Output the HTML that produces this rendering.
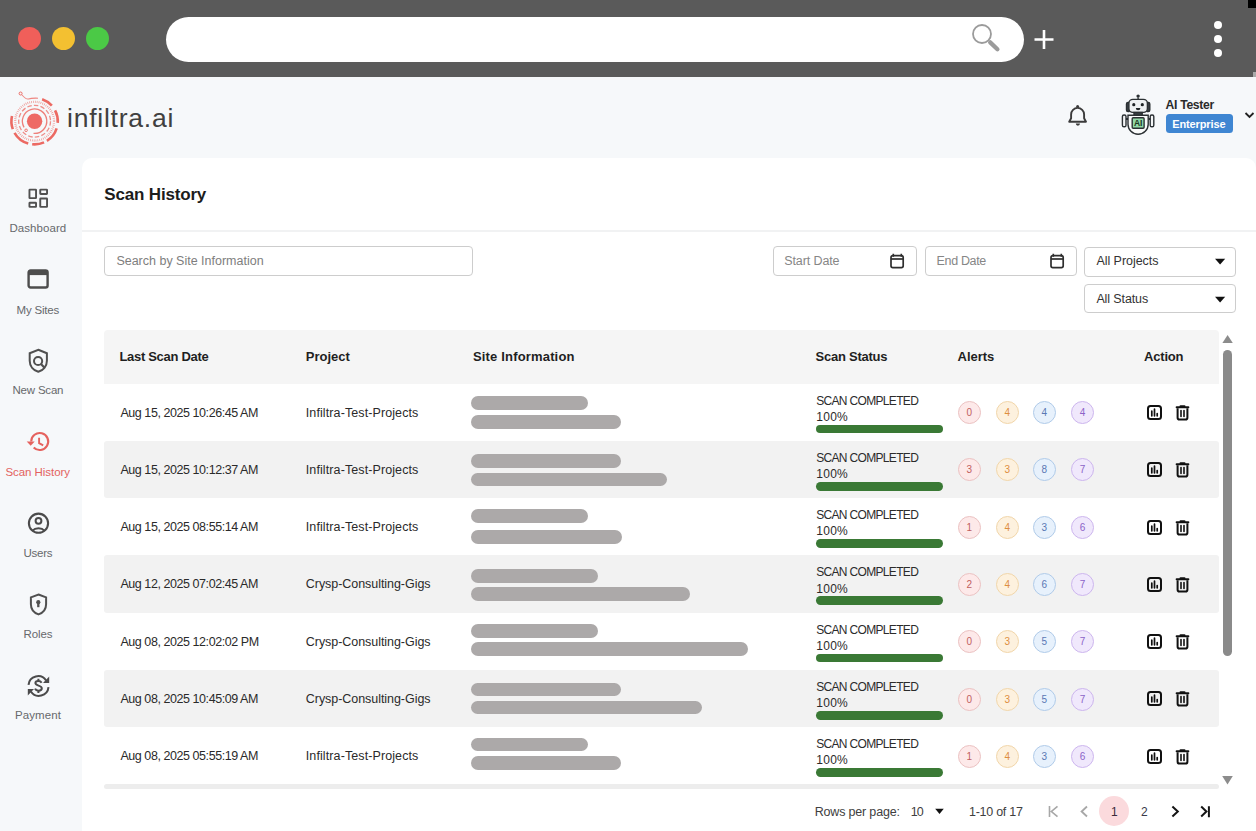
<!DOCTYPE html>
<html><head><meta charset="utf-8">
<style>
*{margin:0;padding:0;box-sizing:border-box}
html,body{width:1256px;height:831px;overflow:hidden;background:#f6f8fa;font-family:"Liberation Sans",sans-serif;color:#222;position:relative}
.a{position:absolute}
.t{position:absolute;white-space:nowrap;line-height:1}
.dot{position:absolute;width:23px;height:23px;border-radius:50%;top:27.2px}
.inp{position:absolute;border:1px solid #cdcdcd;border-radius:4px;background:#fff}
.bar{position:absolute;left:470.7px;height:13.8px;border-radius:7px;background:#aca9a9}
.pgb{position:absolute;left:816px;width:127px;height:8.8px;border-radius:4.5px;background:#3a7935}
.al{position:absolute;width:23px;height:23px;border-radius:50%;font-size:10px;line-height:21px;text-align:center;border:1px solid;font-family:"Liberation Sans",sans-serif}
.a0{background:#fde9e9;border-color:#ebc2c2;color:#c15f5f}
.a1{background:#fdf1de;border-color:#f1d6aa;color:#dd8e3f}
.a2{background:#e7f1fc;border-color:#b0cbe9;color:#5a78b4}
.a3{background:#f0e8fc;border-color:#cdb6ee;color:#8b63c8}
.g{border-radius:3px;background:#f2f2f2}
</style></head><body>
<!-- browser chrome -->
<div class="a" style="left:0;top:0;width:1256px;height:77px;background:#5a5a5a"></div>
<div class="a" style="left:1248px;top:0;width:8px;height:8px;background:#000"></div>
<div class="a" style="left:1253px;top:72px;width:3px;height:5px;background:#aaa"></div>
<div class="dot" style="left:18px;background:#f05f5a"></div>
<div class="dot" style="left:52px;background:#f3c031"></div>
<div class="dot" style="left:86px;background:#4bc946"></div>
<div class="a" style="left:166px;top:17px;width:858px;height:45px;background:#fff;border-radius:22.5px"></div>
<svg class="a" style="left:970px;top:22px" width="32" height="32" viewBox="0 0 32 32"><circle cx="12" cy="12" r="9" fill="none" stroke="#9b9b9b" stroke-width="1.8"/><path d="M20.2 20.4L27.4 27.2" stroke="#9b9b9b" stroke-width="4.3" stroke-linecap="round"/></svg>
<svg class="a" style="left:1033px;top:29px" width="22" height="22" viewBox="0 0 22 22"><path d="M11 1v19M1.5 10.5h19" stroke="#fff" stroke-width="2.6"/></svg>
<div class="a" style="left:1213.9px;top:21px;width:8px;height:8px;border-radius:50%;background:#fff"></div>
<div class="a" style="left:1213.9px;top:35px;width:8px;height:8px;border-radius:50%;background:#fff"></div>
<div class="a" style="left:1213.9px;top:48.7px;width:8px;height:8px;border-radius:50%;background:#fff"></div>

<!-- logo -->
<svg class="a" style="left:4px;top:88px" width="62" height="62" viewBox="0 0 62 62">
 <g fill="none" stroke="#ec6a63">
  <circle cx="30.6" cy="33.2" r="7.7" fill="#ee6a65" stroke="none"/>
  <path d="M20.03 39.30A12.2 12.2 0 1 1 29.54 45.35" stroke-width="1.3" stroke-opacity="0.85"/>
  <circle cx="22.1" cy="42.3" r="1.3" stroke-width="0.9"/>
  <circle cx="30.6" cy="33.2" r="15.9" stroke-width="1.3" stroke-dasharray="4.5 2.2" stroke-opacity="0.75"/>
  <circle cx="30.6" cy="33.2" r="19.4" stroke-width="2.2" stroke-dasharray="0.7 1.2" stroke-opacity="0.7"/>
  <path d="M38.15 11.26A23.2 23.2 0 0 1 47.84 17.68M51.08 22.31A23.2 23.2 0 0 1 53.74 34.82M52.66 40.37A23.2 23.2 0 0 1 42.89 52.87M40.04 54.39A23.2 23.2 0 0 1 28.17 56.27M24.21 55.50A23.2 23.2 0 0 1 10.51 44.80M8.80 41.13A23.2 23.2 0 0 1 7.99 27.98" stroke-width="2.6"/>
  <path d="M34 10.2 Q27 10 24.5 11 Q22 11.5 18 7" stroke-width="1.1" stroke-opacity="0.8"/>
  <circle cx="16.6" cy="5.5" r="1.5" stroke-width="1"/>
 </g>
</svg>

<!-- header right -->
<svg class="a" style="left:1060px;top:98px" width="36" height="34" viewBox="0 0 36 34"><path d="M11.1 20.2V16.4a6.5 6.5 0 0 1 13 0V20.2l1.9 3.5H9.2z" fill="none" stroke="#3b3b3b" stroke-width="1.9" stroke-linejoin="round"/><path d="M15.8 25.6h4.2a2.1 2.1 0 0 1-4.2 0z" fill="#3b3b3b"/><circle cx="17.6" cy="8.4" r="1.5" fill="#3b3b3b"/></svg>

<svg class="a" style="left:1120px;top:93px" width="36" height="44" viewBox="0 0 36 44">
 <g stroke="#2b3033" stroke-width="1.4">
  <circle cx="18.1" cy="3.1" r="1.7" fill="#2b3033" stroke="none"/>
  <path d="M18.1 4.5v2.5"/>
  <rect x="6.5" y="9.5" width="4" height="9" rx="1.5" fill="#3a4045"/>
  <rect x="25.8" y="9.5" width="4" height="9" rx="1.5" fill="#3a4045"/>
  <rect x="8.9" y="6.4" width="18.5" height="13" rx="4" fill="#eef1f3"/>
  <rect x="14" y="19.5" width="8.2" height="3" fill="#3a4045"/>
  <rect x="2.4" y="22" width="3.6" height="11.8" rx="1.6" fill="#f4f6f7"/>
  <rect x="30.2" y="22" width="3.6" height="11.8" rx="1.6" fill="#f4f6f7"/>
  <path d="M6 26h2M28.4 26h2" stroke-width="2"/>
  <path d="M8 22.2h20.2v9a10.1 10.1 0 0 1-20.2 0z" fill="#fafbfb"/>
  <rect x="12.2" y="24.8" width="11.9" height="10.5" rx="1" fill="#90d9a6"/>
 </g>
 <circle cx="13.8" cy="11.7" r="1.6" fill="#1e2326"/>
 <circle cx="22.3" cy="11.7" r="1.6" fill="#1e2326"/>
 <path d="M15.8 15h4.6a2.3 2.3 0 0 1-4.6 0z" fill="#1e2326"/>
 <text x="18.2" y="33.2" font-family="Liberation Sans" font-weight="bold" font-size="8.5" text-anchor="middle" fill="#1c3524">AI</text>
</svg>
<div class="a" style="left:1165.6px;top:114px;width:67.2px;height:19.4px;background:#3f86d2;border-radius:3.5px"></div>
<svg class="a" style="left:1243px;top:110px" width="13" height="10" viewBox="0 0 13 10"><path d="M2.5 3l4 4 4-4" fill="none" stroke="#222" stroke-width="1.8"/></svg>

<!-- sidebar icons -->
<svg class="a" style="left:22px;top:182px" width="32" height="32" viewBox="0 0 32 32"><g fill="none" stroke="#505050" stroke-width="1.9"><rect x="7.45" y="7.65" width="6.6" height="8.5" rx="0.4"/><rect x="7.45" y="20.75" width="6.6" height="4.1" rx="0.4"/><rect x="18.25" y="7.65" width="6.8" height="4.3" rx="0.4"/><rect x="18.25" y="16.55" width="6.8" height="8.3" rx="0.4"/></g></svg>
<svg class="a" style="left:26px;top:267px" width="24" height="24" viewBox="0 0 24 24"><rect x="2.6" y="3.5" width="19" height="17" rx="2" fill="none" stroke="#4d4d4d" stroke-width="2.4"/><rect x="2.6" y="3.5" width="19" height="4.6" fill="#4d4d4d"/></svg>
<svg class="a" style="left:26px;top:348px" width="24" height="26" viewBox="0 0 24 26"><path d="M12.3 1.8l8.6 3.4v7.5c0 5.5-3.7 9.6-8.6 11.1-4.9-1.5-8.6-5.6-8.6-11.1V5.2z" fill="none" stroke="#505050" stroke-width="2"/><circle cx="12.1" cy="13" r="4.1" fill="none" stroke="#505050" stroke-width="2"/><path d="M15 16l3.3 3.5" stroke="#505050" stroke-width="2.2"/></svg>
<svg class="a" style="left:25px;top:430px" width="27" height="25" viewBox="0 0 27 25"><path d="M6.2 11.5a8.5 8.5 0 1 1 2.49 6.01" fill="none" stroke="#e5625e" stroke-width="2.1"/><path d="M1.7 11.4h8l-4 4.3z" fill="#e5625e"/><path d="M14.1 7.8v5.3l4.1 2.2" fill="none" stroke="#e5625e" stroke-width="1.9"/></svg>
<svg class="a" style="left:26px;top:511px" width="25" height="25" viewBox="0 0 25 25"><circle cx="12.5" cy="12.2" r="9.6" fill="none" stroke="#4b4b4b" stroke-width="2.1"/><circle cx="12.5" cy="9.8" r="2.9" fill="none" stroke="#4b4b4b" stroke-width="2"/><path d="M6.2 19.9c1.8-1.9 3.8-2.7 6.3-2.7s4.5.8 6.3 2.7" fill="none" stroke="#4b4b4b" stroke-width="2.1"/></svg>
<svg class="a" style="left:27px;top:591.5px" width="23" height="25" viewBox="0 0 23 25"><path d="M11.5 2.5l7.6 2.9v6.8c0 4.9-3.2 8.6-7.6 10.2-4.4-1.6-7.6-5.3-7.6-10.2V5.4z" fill="none" stroke="#505050" stroke-width="2"/><circle cx="11.3" cy="10.2" r="2.1" fill="#505050"/><path d="M11.3 10.8v4.4" stroke="#505050" stroke-width="2.3"/></svg>
<svg class="a" style="left:25px;top:673px" width="27" height="26" viewBox="0 0 27 26"><g fill="none" stroke="#4b4b4b" stroke-width="2"><path d="M3.5 11.8a9.6 9.6 0 0 1 17.6-4.3"/><path d="M23.5 14.2a9.6 9.6 0 0 1-17.6 4.3"/><path d="M16.6 9.7c-.6-1.2-1.8-1.8-3.3-1.8-1.7 0-2.9.9-2.9 2.2 0 3.1 6.4 1.9 6.4 5.2 0 1.4-1.3 2.4-3.2 2.4-1.6 0-3-.7-3.6-2"/><path d="M13.4 5.8v2.2M13.4 17.8v2.2"/></g><path d="M24.2 3.6v6.4h-6.2z" fill="#4b4b4b"/><path d="M2.8 22.4v-6.4h6.2z" fill="#4b4b4b"/></svg>

<!-- main panel -->
<div class="a" style="left:82px;top:158px;width:1174px;height:673px;background:#fff;border-radius:10px 10px 0 0"></div>
<div class="a" style="left:82px;top:229.5px;width:1174px;height:2px;background:#f1f2f3"></div>

<!-- filters -->
<div class="inp" style="left:104.4px;top:246.4px;width:369px;height:30px"></div>
<div class="inp" style="left:773px;top:246.3px;width:144px;height:30.2px"></div>
<div class="inp" style="left:925px;top:246.3px;width:151.5px;height:30.2px"></div>
<div class="inp" style="left:1084.2px;top:246.5px;width:151.6px;height:30.2px"></div>
<div class="inp" style="left:1084.2px;top:284.4px;width:151.6px;height:29px"></div>
<svg class="a" style="left:888px;top:252px" width="18" height="18" viewBox="0 0 18 18"><rect x="3" y="3.6" width="12.2" height="12" rx="1.8" fill="none" stroke="#2e2e2e" stroke-width="1.7"/><path d="M3 7h12.2" stroke="#2e2e2e" stroke-width="1.7"/><path d="M5.3 1.8v3M13.3 1.8v3" stroke="#2e2e2e" stroke-width="1.6"/></svg>
<svg class="a" style="left:1048px;top:252px" width="18" height="18" viewBox="0 0 18 18"><rect x="3" y="3.6" width="12.2" height="12" rx="1.8" fill="none" stroke="#2e2e2e" stroke-width="1.7"/><path d="M3 7h12.2" stroke="#2e2e2e" stroke-width="1.7"/><path d="M5.3 1.8v3M13.3 1.8v3" stroke="#2e2e2e" stroke-width="1.6"/></svg>
<svg class="a" style="left:1214px;top:258px" width="12" height="8" viewBox="0 0 12 8"><path d="M1 0.8h10.2L6.1 6.5z" fill="#111"/></svg>
<svg class="a" style="left:1214px;top:296px" width="12" height="8" viewBox="0 0 12 8"><path d="M1 0.8h10.2L6.1 6.5z" fill="#111"/></svg>

<!-- table -->
<div class="a" style="left:104px;top:330.2px;width:1114.5px;height:53.5px;background:#f5f5f5;border-radius:4px 4px 0 0"></div>
<div class="a" style="left:104px;top:784px;width:1115px;height:5px;background:#ededed;border-radius:2.5px"></div>
<div class="a g" style="left:104px;top:440.75px;width:1115px;height:57.25px"></div>
<div class="a g" style="left:104px;top:555.25px;width:1115px;height:57.25px"></div>
<div class="a g" style="left:104px;top:669.75px;width:1115px;height:57.25px"></div>
<div class="bar" style="top:396.2px;width:117.1px"></div>
<div class="bar" style="top:414.9px;width:150.0px"></div>
<div class="pgb" style="top:424.5px"></div>
<div class="al a0" style="left:957.7px;top:401.2px">0</div>
<div class="al a1" style="left:995.9px;top:401.2px">4</div>
<div class="al a2" style="left:1032.9px;top:401.2px">4</div>
<div class="al a3" style="left:1071.1px;top:401.2px">4</div>
<svg class="a" style="left:1146px;top:404.0px" width="17" height="17" viewBox="0 0 17 17"><rect x="2" y="2" width="13" height="13" rx="2.5" fill="none" stroke="#111" stroke-width="2"/><path d="M5.8 7.2v4.6M8.5 5.2v6.6M11.2 9.5v2.3" stroke="#111" stroke-width="1.7" stroke-linecap="round"/></svg>
<svg class="a" style="left:1175px;top:404.0px" width="15" height="17" viewBox="0 0 15 17"><path d="M1.6 3.2h11.8" stroke="#111" stroke-width="1.9" stroke-linecap="round"/><path d="M5.5 2.2h4" stroke="#111" stroke-width="2" stroke-linecap="round"/><path d="M2.6 4.2v9.6a1.8 1.8 0 0 0 1.8 1.8h6.2a1.8 1.8 0 0 0 1.8-1.8V4.2" fill="none" stroke="#111" stroke-width="2"/><path d="M6 6.5v6M9 6.5v6" stroke="#111" stroke-width="1.6" stroke-linecap="round"/></svg>
<div class="bar" style="top:454.3px;width:150.0px"></div>
<div class="bar" style="top:472.6px;width:195.9px"></div>
<div class="pgb" style="top:481.8px"></div>
<div class="al a0" style="left:957.7px;top:458.4px">3</div>
<div class="al a1" style="left:995.9px;top:458.4px">3</div>
<div class="al a2" style="left:1032.9px;top:458.4px">8</div>
<div class="al a3" style="left:1071.1px;top:458.4px">7</div>
<svg class="a" style="left:1146px;top:461.2px" width="17" height="17" viewBox="0 0 17 17"><rect x="2" y="2" width="13" height="13" rx="2.5" fill="none" stroke="#111" stroke-width="2"/><path d="M5.8 7.2v4.6M8.5 5.2v6.6M11.2 9.5v2.3" stroke="#111" stroke-width="1.7" stroke-linecap="round"/></svg>
<svg class="a" style="left:1175px;top:461.2px" width="15" height="17" viewBox="0 0 15 17"><path d="M1.6 3.2h11.8" stroke="#111" stroke-width="1.9" stroke-linecap="round"/><path d="M5.5 2.2h4" stroke="#111" stroke-width="2" stroke-linecap="round"/><path d="M2.6 4.2v9.6a1.8 1.8 0 0 0 1.8 1.8h6.2a1.8 1.8 0 0 0 1.8-1.8V4.2" fill="none" stroke="#111" stroke-width="2"/><path d="M6 6.5v6M9 6.5v6" stroke="#111" stroke-width="1.6" stroke-linecap="round"/></svg>
<div class="bar" style="top:509.0px;width:117.1px"></div>
<div class="bar" style="top:529.9px;width:151.3px"></div>
<div class="pgb" style="top:539.0px"></div>
<div class="al a0" style="left:957.7px;top:515.7px">1</div>
<div class="al a1" style="left:995.9px;top:515.7px">4</div>
<div class="al a2" style="left:1032.9px;top:515.7px">3</div>
<div class="al a3" style="left:1071.1px;top:515.7px">6</div>
<svg class="a" style="left:1146px;top:518.5px" width="17" height="17" viewBox="0 0 17 17"><rect x="2" y="2" width="13" height="13" rx="2.5" fill="none" stroke="#111" stroke-width="2"/><path d="M5.8 7.2v4.6M8.5 5.2v6.6M11.2 9.5v2.3" stroke="#111" stroke-width="1.7" stroke-linecap="round"/></svg>
<svg class="a" style="left:1175px;top:518.5px" width="15" height="17" viewBox="0 0 15 17"><path d="M1.6 3.2h11.8" stroke="#111" stroke-width="1.9" stroke-linecap="round"/><path d="M5.5 2.2h4" stroke="#111" stroke-width="2" stroke-linecap="round"/><path d="M2.6 4.2v9.6a1.8 1.8 0 0 0 1.8 1.8h6.2a1.8 1.8 0 0 0 1.8-1.8V4.2" fill="none" stroke="#111" stroke-width="2"/><path d="M6 6.5v6M9 6.5v6" stroke="#111" stroke-width="1.6" stroke-linecap="round"/></svg>
<div class="bar" style="top:568.8px;width:127.3px"></div>
<div class="bar" style="top:587.2px;width:219.8px"></div>
<div class="pgb" style="top:596.2px"></div>
<div class="al a0" style="left:957.7px;top:573.0px">2</div>
<div class="al a1" style="left:995.9px;top:573.0px">4</div>
<div class="al a2" style="left:1032.9px;top:573.0px">6</div>
<div class="al a3" style="left:1071.1px;top:573.0px">7</div>
<svg class="a" style="left:1146px;top:575.8px" width="17" height="17" viewBox="0 0 17 17"><rect x="2" y="2" width="13" height="13" rx="2.5" fill="none" stroke="#111" stroke-width="2"/><path d="M5.8 7.2v4.6M8.5 5.2v6.6M11.2 9.5v2.3" stroke="#111" stroke-width="1.7" stroke-linecap="round"/></svg>
<svg class="a" style="left:1175px;top:575.8px" width="15" height="17" viewBox="0 0 15 17"><path d="M1.6 3.2h11.8" stroke="#111" stroke-width="1.9" stroke-linecap="round"/><path d="M5.5 2.2h4" stroke="#111" stroke-width="2" stroke-linecap="round"/><path d="M2.6 4.2v9.6a1.8 1.8 0 0 0 1.8 1.8h6.2a1.8 1.8 0 0 0 1.8-1.8V4.2" fill="none" stroke="#111" stroke-width="2"/><path d="M6 6.5v6M9 6.5v6" stroke="#111" stroke-width="1.6" stroke-linecap="round"/></svg>
<div class="bar" style="top:624.2px;width:127.8px"></div>
<div class="bar" style="top:642.1px;width:277.8px"></div>
<div class="pgb" style="top:653.5px"></div>
<div class="al a0" style="left:957.7px;top:630.2px">0</div>
<div class="al a1" style="left:995.9px;top:630.2px">3</div>
<div class="al a2" style="left:1032.9px;top:630.2px">5</div>
<div class="al a3" style="left:1071.1px;top:630.2px">7</div>
<svg class="a" style="left:1146px;top:633.0px" width="17" height="17" viewBox="0 0 17 17"><rect x="2" y="2" width="13" height="13" rx="2.5" fill="none" stroke="#111" stroke-width="2"/><path d="M5.8 7.2v4.6M8.5 5.2v6.6M11.2 9.5v2.3" stroke="#111" stroke-width="1.7" stroke-linecap="round"/></svg>
<svg class="a" style="left:1175px;top:633.0px" width="15" height="17" viewBox="0 0 15 17"><path d="M1.6 3.2h11.8" stroke="#111" stroke-width="1.9" stroke-linecap="round"/><path d="M5.5 2.2h4" stroke="#111" stroke-width="2" stroke-linecap="round"/><path d="M2.6 4.2v9.6a1.8 1.8 0 0 0 1.8 1.8h6.2a1.8 1.8 0 0 0 1.8-1.8V4.2" fill="none" stroke="#111" stroke-width="2"/><path d="M6 6.5v6M9 6.5v6" stroke="#111" stroke-width="1.6" stroke-linecap="round"/></svg>
<div class="bar" style="top:682.7px;width:150.0px"></div>
<div class="bar" style="top:700.6px;width:231.3px"></div>
<div class="pgb" style="top:710.8px"></div>
<div class="al a0" style="left:957.7px;top:687.5px">0</div>
<div class="al a1" style="left:995.9px;top:687.5px">3</div>
<div class="al a2" style="left:1032.9px;top:687.5px">5</div>
<div class="al a3" style="left:1071.1px;top:687.5px">7</div>
<svg class="a" style="left:1146px;top:690.2px" width="17" height="17" viewBox="0 0 17 17"><rect x="2" y="2" width="13" height="13" rx="2.5" fill="none" stroke="#111" stroke-width="2"/><path d="M5.8 7.2v4.6M8.5 5.2v6.6M11.2 9.5v2.3" stroke="#111" stroke-width="1.7" stroke-linecap="round"/></svg>
<svg class="a" style="left:1175px;top:690.2px" width="15" height="17" viewBox="0 0 15 17"><path d="M1.6 3.2h11.8" stroke="#111" stroke-width="1.9" stroke-linecap="round"/><path d="M5.5 2.2h4" stroke="#111" stroke-width="2" stroke-linecap="round"/><path d="M2.6 4.2v9.6a1.8 1.8 0 0 0 1.8 1.8h6.2a1.8 1.8 0 0 0 1.8-1.8V4.2" fill="none" stroke="#111" stroke-width="2"/><path d="M6 6.5v6M9 6.5v6" stroke="#111" stroke-width="1.6" stroke-linecap="round"/></svg>
<div class="bar" style="top:737.6px;width:117.1px"></div>
<div class="bar" style="top:756.0px;width:150.0px"></div>
<div class="pgb" style="top:768.0px"></div>
<div class="al a0" style="left:957.7px;top:744.7px">1</div>
<div class="al a1" style="left:995.9px;top:744.7px">4</div>
<div class="al a2" style="left:1032.9px;top:744.7px">3</div>
<div class="al a3" style="left:1071.1px;top:744.7px">6</div>
<svg class="a" style="left:1146px;top:747.5px" width="17" height="17" viewBox="0 0 17 17"><rect x="2" y="2" width="13" height="13" rx="2.5" fill="none" stroke="#111" stroke-width="2"/><path d="M5.8 7.2v4.6M8.5 5.2v6.6M11.2 9.5v2.3" stroke="#111" stroke-width="1.7" stroke-linecap="round"/></svg>
<svg class="a" style="left:1175px;top:747.5px" width="15" height="17" viewBox="0 0 15 17"><path d="M1.6 3.2h11.8" stroke="#111" stroke-width="1.9" stroke-linecap="round"/><path d="M5.5 2.2h4" stroke="#111" stroke-width="2" stroke-linecap="round"/><path d="M2.6 4.2v9.6a1.8 1.8 0 0 0 1.8 1.8h6.2a1.8 1.8 0 0 0 1.8-1.8V4.2" fill="none" stroke="#111" stroke-width="2"/><path d="M6 6.5v6M9 6.5v6" stroke="#111" stroke-width="1.6" stroke-linecap="round"/></svg>

<!-- scrollbar -->
<svg class="a" style="left:1221px;top:334px" width="13" height="10" viewBox="0 0 13 10"><path d="M1.4 9h10.4L6.6 1z" fill="#8c8c8c"/></svg>
<div class="a" style="left:1223px;top:349.7px;width:9.2px;height:306px;background:#8a8a8a;border-radius:4.6px"></div>
<svg class="a" style="left:1221px;top:775px" width="13" height="10" viewBox="0 0 13 10"><path d="M1.2 1h10.6L6.5 9.6z" fill="#8c8c8c"/></svg>

<!-- pagination -->
<svg class="a" style="left:934px;top:807px" width="11" height="8" viewBox="0 0 11 8"><path d="M1.2 1.7h8.6L5.5 7z" fill="#111"/></svg>
<div class="a" style="left:1099.3px;top:796.4px;width:30px;height:30px;border-radius:50%;background:#fbdadd"></div>
<svg class="a" style="left:1046px;top:804px" width="14" height="15" viewBox="0 0 14 15"><path d="M3.5 2v11M11.5 2.3L5.4 7.5l6.1 5.2" fill="none" stroke="#a7a7a7" stroke-width="1.6"/></svg>
<svg class="a" style="left:1078px;top:804px" width="12" height="15" viewBox="0 0 12 15"><path d="M9 2.5L3.6 7.5 9 12.5" fill="none" stroke="#a7a7a7" stroke-width="1.8"/></svg>
<svg class="a" style="left:1169px;top:804px" width="12" height="15" viewBox="0 0 12 15"><path d="M3.4 2.5l5.4 5-5.4 5" fill="none" stroke="#151515" stroke-width="2"/></svg>
<svg class="a" style="left:1198px;top:804px" width="15" height="15" viewBox="0 0 15 15"><path d="M3.2 2.5l5.2 5-5.2 5M10.9 2.3v10.9" fill="none" stroke="#151515" stroke-width="2"/></svg>

<div class="t" style="left:9.50px;top:223.47px;font-size:11.5px;font-weight:normal;color:#67696c;letter-spacing:0.050px">Dashboard</div>
<div class="t" style="left:16.50px;top:304.57px;font-size:11.5px;font-weight:normal;color:#67696c;letter-spacing:-0.186px">My Sites</div>
<div class="t" style="left:12.50px;top:385.37px;font-size:11.5px;font-weight:normal;color:#67696c;letter-spacing:-0.200px">New Scan</div>
<div class="t" style="left:5.40px;top:467.17px;font-size:11.5px;font-weight:normal;color:#e3625f;letter-spacing:-0.045px">Scan History</div>
<div class="t" style="left:23.40px;top:547.77px;font-size:11.5px;font-weight:normal;color:#67696c;letter-spacing:-0.225px">Users</div>
<div class="t" style="left:23.50px;top:628.97px;font-size:11.5px;font-weight:normal;color:#67696c;letter-spacing:-0.125px">Roles</div>
<div class="t" style="left:15.00px;top:710.17px;font-size:11.5px;font-weight:normal;color:#67696c;letter-spacing:0.100px">Payment</div>
<div class="t" style="left:67.10px;top:105.07px;font-size:26.5px;font-weight:normal;color:#404040;letter-spacing:0.750px">infiltra.ai</div>
<div class="t" style="left:1165.60px;top:98.87px;font-size:12.2px;font-weight:bold;color:#2a2a2a;letter-spacing:-0.325px">AI Tester</div>
<div class="t" style="left:1172.30px;top:118.69px;font-size:11px;font-weight:bold;color:#ffffff;letter-spacing:-0.133px">Enterprise</div>
<div class="t" style="left:104.30px;top:185.81px;font-size:17px;font-weight:bold;color:#1c1c1c;letter-spacing:-0.173px">Scan History</div>
<div class="t" style="left:116.40px;top:254.82px;font-size:12.5px;font-weight:normal;color:#7e7e7e;letter-spacing:-0.004px">Search by Site Information</div>
<div class="t" style="left:784.20px;top:254.82px;font-size:12.5px;font-weight:normal;color:#868686;letter-spacing:-0.100px">Start Date</div>
<div class="t" style="left:936.50px;top:255.02px;font-size:12.5px;font-weight:normal;color:#868686;letter-spacing:-0.329px">End Date</div>
<div class="t" style="left:1096.40px;top:255.32px;font-size:12.5px;font-weight:normal;color:#333333;letter-spacing:-0.036px">All Projects</div>
<div class="t" style="left:1096.40px;top:292.62px;font-size:12.5px;font-weight:normal;color:#333333;letter-spacing:-0.111px">All Status</div>
<div class="t" style="left:119.40px;top:350.20px;font-size:13px;font-weight:bold;color:#1f1f1f;letter-spacing:-0.300px">Last Scan Date</div>
<div class="t" style="left:305.80px;top:350.20px;font-size:13px;font-weight:bold;color:#1f1f1f;letter-spacing:0.000px">Project</div>
<div class="t" style="left:473.00px;top:350.20px;font-size:13px;font-weight:bold;color:#1f1f1f;letter-spacing:0.167px">Site Information</div>
<div class="t" style="left:815.60px;top:350.20px;font-size:13px;font-weight:bold;color:#1f1f1f;letter-spacing:-0.260px">Scan Status</div>
<div class="t" style="left:957.60px;top:350.20px;font-size:13px;font-weight:bold;color:#1f1f1f;letter-spacing:-0.060px">Alerts</div>
<div class="t" style="left:1144.00px;top:350.20px;font-size:13px;font-weight:bold;color:#1f1f1f;letter-spacing:-0.180px">Action</div>
<div class="t" style="left:120.40px;top:406.52px;font-size:12.5px;font-weight:normal;color:#2a2a2a;letter-spacing:-0.435px">Aug 15, 2025 10:26:45 AM</div>
<div class="t" style="left:305.80px;top:406.52px;font-size:12.5px;font-weight:normal;color:#2a2a2a;letter-spacing:0.100px">Infiltra-Test-Projects</div>
<div class="t" style="left:816.20px;top:394.54px;font-size:12px;font-weight:normal;color:#2b2b2b;letter-spacing:-0.669px">SCAN COMPLETED</div>
<div class="t" style="left:816.20px;top:410.84px;font-size:12px;font-weight:normal;color:#2b2b2b;letter-spacing:0.300px">100%</div>
<div class="t" style="left:120.40px;top:463.77px;font-size:12.5px;font-weight:normal;color:#2a2a2a;letter-spacing:-0.435px">Aug 15, 2025 10:12:37 AM</div>
<div class="t" style="left:305.80px;top:463.77px;font-size:12.5px;font-weight:normal;color:#2a2a2a;letter-spacing:0.100px">Infiltra-Test-Projects</div>
<div class="t" style="left:816.20px;top:451.79px;font-size:12px;font-weight:normal;color:#2b2b2b;letter-spacing:-0.669px">SCAN COMPLETED</div>
<div class="t" style="left:816.20px;top:468.09px;font-size:12px;font-weight:normal;color:#2b2b2b;letter-spacing:0.300px">100%</div>
<div class="t" style="left:120.40px;top:521.02px;font-size:12.5px;font-weight:normal;color:#2a2a2a;letter-spacing:-0.435px">Aug 15, 2025 08:55:14 AM</div>
<div class="t" style="left:305.80px;top:521.02px;font-size:12.5px;font-weight:normal;color:#2a2a2a;letter-spacing:0.100px">Infiltra-Test-Projects</div>
<div class="t" style="left:816.20px;top:509.04px;font-size:12px;font-weight:normal;color:#2b2b2b;letter-spacing:-0.669px">SCAN COMPLETED</div>
<div class="t" style="left:816.20px;top:525.34px;font-size:12px;font-weight:normal;color:#2b2b2b;letter-spacing:0.300px">100%</div>
<div class="t" style="left:120.40px;top:578.27px;font-size:12.5px;font-weight:normal;color:#2a2a2a;letter-spacing:-0.435px">Aug 12, 2025 07:02:45 AM</div>
<div class="t" style="left:305.80px;top:578.27px;font-size:12.5px;font-weight:normal;color:#2a2a2a;letter-spacing:-0.050px">Crysp-Consulting-Gigs</div>
<div class="t" style="left:816.20px;top:566.29px;font-size:12px;font-weight:normal;color:#2b2b2b;letter-spacing:-0.669px">SCAN COMPLETED</div>
<div class="t" style="left:816.20px;top:582.59px;font-size:12px;font-weight:normal;color:#2b2b2b;letter-spacing:0.300px">100%</div>
<div class="t" style="left:120.40px;top:635.52px;font-size:12.5px;font-weight:normal;color:#2a2a2a;letter-spacing:-0.435px">Aug 08, 2025 12:02:02 PM</div>
<div class="t" style="left:305.80px;top:635.52px;font-size:12.5px;font-weight:normal;color:#2a2a2a;letter-spacing:-0.050px">Crysp-Consulting-Gigs</div>
<div class="t" style="left:816.20px;top:623.54px;font-size:12px;font-weight:normal;color:#2b2b2b;letter-spacing:-0.669px">SCAN COMPLETED</div>
<div class="t" style="left:816.20px;top:639.84px;font-size:12px;font-weight:normal;color:#2b2b2b;letter-spacing:0.300px">100%</div>
<div class="t" style="left:120.40px;top:692.77px;font-size:12.5px;font-weight:normal;color:#2a2a2a;letter-spacing:-0.435px">Aug 08, 2025 10:45:09 AM</div>
<div class="t" style="left:305.80px;top:692.77px;font-size:12.5px;font-weight:normal;color:#2a2a2a;letter-spacing:-0.050px">Crysp-Consulting-Gigs</div>
<div class="t" style="left:816.20px;top:680.79px;font-size:12px;font-weight:normal;color:#2b2b2b;letter-spacing:-0.669px">SCAN COMPLETED</div>
<div class="t" style="left:816.20px;top:697.09px;font-size:12px;font-weight:normal;color:#2b2b2b;letter-spacing:0.300px">100%</div>
<div class="t" style="left:120.40px;top:750.02px;font-size:12.5px;font-weight:normal;color:#2a2a2a;letter-spacing:-0.435px">Aug 08, 2025 05:55:19 AM</div>
<div class="t" style="left:305.80px;top:750.02px;font-size:12.5px;font-weight:normal;color:#2a2a2a;letter-spacing:0.100px">Infiltra-Test-Projects</div>
<div class="t" style="left:816.20px;top:738.04px;font-size:12px;font-weight:normal;color:#2b2b2b;letter-spacing:-0.669px">SCAN COMPLETED</div>
<div class="t" style="left:816.20px;top:754.34px;font-size:12px;font-weight:normal;color:#2b2b2b;letter-spacing:0.300px">100%</div>
<div class="t" style="left:814.70px;top:805.92px;font-size:12.5px;font-weight:normal;color:#404040;letter-spacing:-0.177px">Rows per page:</div>
<div class="t" style="left:910.80px;top:805.92px;font-size:12.5px;font-weight:normal;color:#404040;letter-spacing:-1.000px">10</div>
<div class="t" style="left:969.00px;top:805.92px;font-size:12.5px;font-weight:normal;color:#404040;letter-spacing:-0.267px">1-10 of 17</div>
<div class="t" style="left:1111.00px;top:806.34px;font-size:12px;font-weight:normal;color:#3a2a3a;letter-spacing:0.000px">1</div>
<div class="t" style="left:1141.00px;top:806.34px;font-size:12px;font-weight:normal;color:#3a3a4a;letter-spacing:0.000px">2</div>
</body></html>
